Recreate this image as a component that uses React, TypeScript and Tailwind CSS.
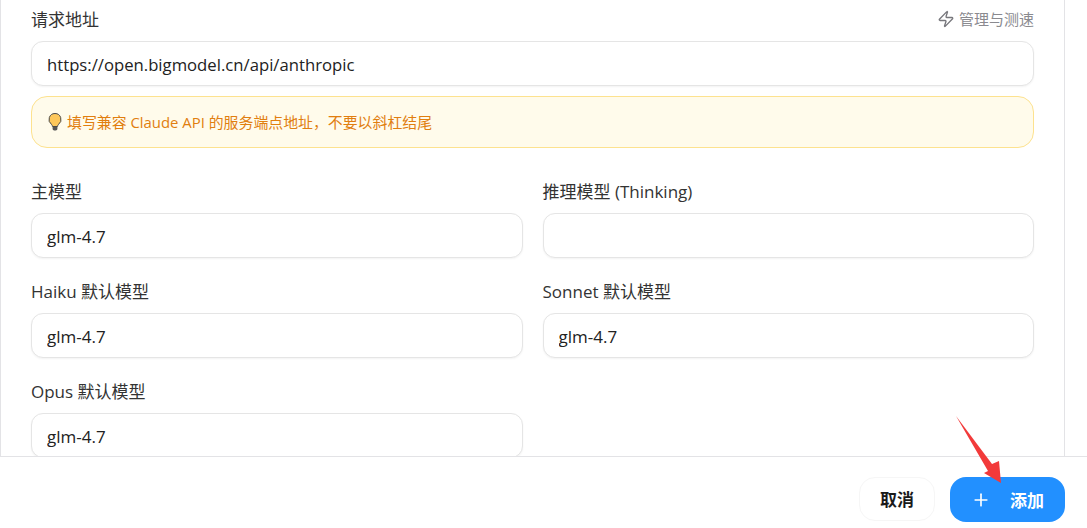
import { Plus, Zap } from 'lucide-react'

const font = 'font-["Open_Sans","Noto_Sans_CJK_SC",sans-serif]'

function Field({ label, value }: { label: string; value: string }) {
  return (
    <div>
      <div className="h-6 text-[17px] leading-[26px] text-[#333333]">{label}</div>
      <input
        readOnly
        value={value}
        className="mt-[10px] h-[45px] w-full rounded-xl border border-[#e5e5e5] bg-white px-[15px] pt-[2px] text-[17px] text-[#222222] shadow-[0_1px_2px_rgba(0,0,0,0.05)] outline-none"
      />
    </div>
  )
}

function Bulb() {
  return (
    <svg width="16" height="20" viewBox="0 0 16 20" className="shrink-0">
      <path d="M8 1.5a6 6 0 0 0-3.6 10.8c.7.6 1 1.3 1 2.2h5.2c0-.9.3-1.6 1-2.2A6 6 0 0 0 8 1.5z" fill="#fdc75b" stroke="#4a4a4a" strokeWidth="1" />
      <path d="M5.6 15h4.8v1.8c0 .9-.8 1.7-1.6 1.7H7.2c-.8 0-1.6-.8-1.6-1.7z" fill="#555555" />
    </svg>
  )
}

export default function App() {
  return (
    <div className={`relative flex h-[528px] w-[1087px] flex-col overflow-hidden bg-white ${font}`}>
      <div className="h-[457px] overflow-hidden border-b border-[#e3e3e6]">
        <div className="h-[456px] w-[1065px] overflow-hidden border-x border-[#e3e3e6] px-[30px] pt-2">
          <div className="flex h-6 items-center justify-between">
            <span className="text-[17px] text-[#333333]">请求地址</span>
            <span className="-mt-[2px] flex items-center gap-1 text-[15px] text-[#8a8a8f]">
              <Zap size={18} strokeWidth={1.8} className="text-[#77777c]" />
              管理与测速
            </span>
          </div>
          <input
            readOnly
            value="https://open.bigmodel.cn/api/anthropic"
            className="mt-[9px] h-[45px] w-full rounded-xl border border-[#e5e5e5] bg-white px-[15px] pt-[2px] text-[16.7px] text-[#222222] shadow-[0_1px_2px_rgba(0,0,0,0.05)] outline-none"
          />
          <div className="mt-[10px] flex h-[52px] items-center gap-1 rounded-2xl border border-[#fde28f] bg-[#fffbeb] px-[15px] text-[14.9px] text-[#e17e0f]">
            <Bulb />
            填写兼容 Claude API 的服务端点地址，不要以斜杠结尾
          </div>
          <div className="mt-[31px] grid grid-cols-2 gap-x-5 gap-y-[21px]">
            <Field label="主模型" value="glm-4.7" />
            <Field label="推理模型 (Thinking)" value="" />
            <Field label="Haiku 默认模型" value="glm-4.7" />
            <Field label="Sonnet 默认模型" value="glm-4.7" />
            <Field label="Opus 默认模型" value="glm-4.7" />
          </div>
        </div>
      </div>
      <div className="flex flex-1 items-start justify-end gap-[15px] pr-[22px] pt-5">
        <button className="h-11 w-[76px] rounded-2xl border border-[#f6f6f6] bg-white pt-[2px] text-[17px] font-semibold text-[#1a1a1a]">
          取消
        </button>
        <button className="flex h-[45px] w-[115px] items-center gap-[19px] rounded-2xl bg-[#2290ff] pl-[21px] pt-[2px] text-[17px] font-semibold text-white">
          <Plus size={20} strokeWidth={2} className="-mt-[2px]" />
          添加
        </button>
      </div>
      <svg width="60" height="80" viewBox="0 0 60 80" className="absolute left-[950px] top-[410px]">
        <path d="M6 6 L42 54 L49 51 L51 73 L34 63 L38 61 Z" fill="#f23a3a" />
      </svg>
    </div>
  )
}
